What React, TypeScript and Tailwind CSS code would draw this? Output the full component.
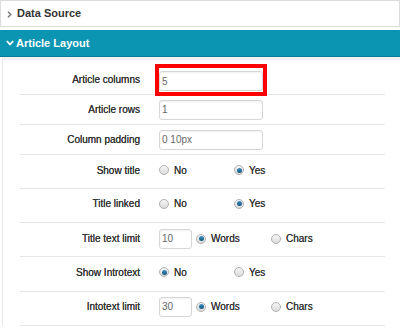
import React from "react";

type Opt = { label: string; checked?: boolean };

function Radio({ checked }: { checked?: boolean }) {
  return (
    <span className="flex h-[10px] w-[10px] shrink-0 items-center justify-center rounded-full border border-[#b0b0b0] bg-gradient-to-b from-[#f6f6f6] to-[#dcdcdc]">
      {checked && <span className="h-[5px] w-[5px] rounded-full bg-gradient-to-b from-[#3d8fc0] to-[#14577f]" />}
    </span>
  );
}

function RadioOption({ label, checked }: Opt) {
  return (
    <label className="flex w-[75px] items-center gap-[5px] text-[10px] text-[#333] [text-shadow:0_0_0.5px_#444]">
      <Radio checked={checked} />
      <span>{label}</span>
    </label>
  );
}

function TextBox({ value, width }: { value: string; width: string }) {
  return (
    <input
      readOnly
      value={value}
      className={`h-[20px] ${width} rounded-[3px] border border-[#d6d6d6] bg-white px-[2px] text-[10px] text-[#666] shadow-[inset_0_1px_2px_rgba(0,0,0,0.06)] outline-none`}
    />
  );
}

function Row({ label, h, children }: { label: string; h: string; children: React.ReactNode }) {
  return (
    <div className={`flex ${h} items-center border-b border-[#e6e6e6]`}>
      <div className="w-[120px] shrink-0 text-right text-[10px] text-[#333] [text-shadow:0_0_0.6px_#333]">{label}</div>
      <div className="ml-[19px] flex items-center">{children}</div>
    </div>
  );
}

export default function App() {
  return (
    <div className="h-[328px] w-[400px] overflow-hidden bg-white font-['Liberation_Sans',Arial,sans-serif]">
      {/* collapsed panel */}
      <div className="flex h-[27px] items-center border border-[#dcdcdc] bg-white pl-[6px]">
        <svg width="5" height="7" viewBox="0 0 5 7" className="mt-[1px]">
          <path d="M1 0.8 L3.8 3.5 L1 6.2" fill="none" stroke="#777" strokeWidth="1.4" />
        </svg>
        <span className="ml-[5px] text-[11px] font-bold text-[#333]">Data Source</span>
      </div>

      {/* open panel header */}
      <div className="mt-[3px] flex h-[27px] items-center border-b border-[#0a7e97] bg-[#0c95b2] pl-[6px]">
        <svg width="8" height="6" viewBox="0 0 8 6">
          <path d="M0.8 1 L4 4.4 L7.2 1" fill="none" stroke="#fff" strokeWidth="1.8" />
        </svg>
        <span className="ml-[2px] text-[11px] font-bold text-white">Article Layout</span>
      </div>

      <div className="ml-[2px] border-l border-t-[3px] border-l-[#e8e8e8] border-t-[#f2f2f2] pl-[17px] pr-[15px]">
        <Row label="Article columns" h="h-[35px] pt-[5px]">
          <div className="relative">
            <TextBox value="5" width="w-[104px]" />
            <div className="pointer-events-none absolute -bottom-[4px] -left-[4px] -right-[4px] -top-[4px] border-[4px] border-[#ff0000]" />
          </div>
        </Row>
        <Row label="Article rows" h="h-[30px]">
          <TextBox value="1" width="w-[104px]" />
        </Row>
        <Row label="Column padding" h="h-[30px]">
          <TextBox value="0 10px" width="w-[104px]" />
        </Row>
        <Row label="Show title" h="h-[34px] pb-[3px]">
          <RadioOption label="No" />
          <RadioOption label="Yes" checked />
        </Row>
        <Row label="Title linked" h="h-[34px] pb-[4px]">
          <RadioOption label="No" />
          <RadioOption label="Yes" checked />
        </Row>
        <Row label="Title text limit" h="h-[34px] pb-[2px]">
          <TextBox value="10" width="w-[33px]" />
          <div className="ml-[4px] flex">
            <RadioOption label="Words" checked />
            <RadioOption label="Chars" />
          </div>
        </Row>
        <Row label="Show Introtext" h="h-[35px] pb-[4px]">
          <RadioOption label="No" checked />
          <RadioOption label="Yes" />
        </Row>
        <Row label="Intotext limit" h="h-[34px] pb-[4px]">
          <TextBox value="30" width="w-[33px]" />
          <div className="ml-[4px] flex">
            <RadioOption label="Words" checked />
            <RadioOption label="Chars" />
          </div>
        </Row>
      </div>
    </div>
  );
}
